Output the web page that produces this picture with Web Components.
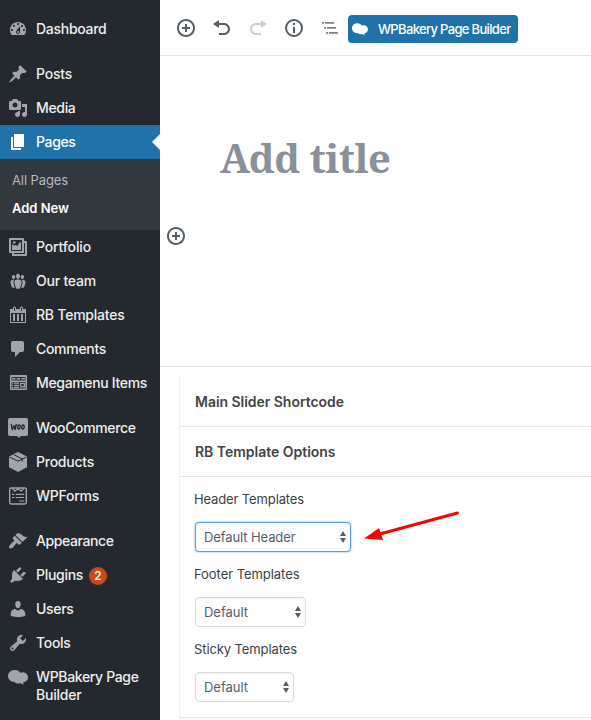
<!DOCTYPE html>
<html lang="en">
<head>
<meta charset="utf-8">
<title>Add New Page</title>
<style>
body { margin: 0; background: #fff; overflow: hidden; font-family: Inter, "Liberation Sans", sans-serif; }
</style>
</head>
<body>
<page-editor></page-editor>
<script>
const ICONS = {
  dashboard: '<path d="M3.76 16h12.48c1.1-1.37 1.76-3.11 1.76-5 0-4.42-3.58-8-8-8s-8 3.58-8 8c0 1.89.66 3.63 1.76 5zM10 4c.55 0 1 .45 1 1s-.45 1-1 1-1-.45-1-1 .45-1 1-1zM6 6c.55 0 1 .45 1 1s-.45 1-1 1-1-.45-1-1 .45-1 1-1zm8 0c.55 0 1 .45 1 1s-.45 1-1 1-1-.45-1-1 .45-1 1-1zm-5.37 5.55L12 7v6c0 1.1-.9 2-2 2s-2-.9-2-2c0-.57.24-1.08.63-1.45zM4 10c.55 0 1 .45 1 1s-.45 1-1 1-1-.45-1-1 .45-1 1-1zm12 0c.55 0 1 .45 1 1s-.45 1-1 1-1-.45-1-1 .45-1 1-1zm-5 3c0-.55-.45-1-1-1s-1 .45-1 1 .45 1 1 1 1-.45 1-1z"/>',
  post: '<path d="M10.44 3.02l1.82-1.82 6.36 6.35-1.83 1.82c-1.05-.68-2.48-.57-3.41.36l-.75.75c-.92.93-1.04 2.35-.35 3.41l-1.83 1.82-2.41-2.41-2.8 2.79c-.42.42-3.38 2.71-3.8 2.29s1.86-3.39 2.28-3.81l2.79-2.79L4.1 9.36l1.83-1.82c1.05.69 2.48.57 3.4-.36l.75-.75c.93-.92 1.05-2.35.36-3.41z"/>',
  media: '<path d="M13 11V4c0-.55-.45-1-1-1h-1.67L9 1H5L3.67 3H2c-.55 0-1 .45-1 1v7c0 .55.45 1 1 1h10c.55 0 1-.45 1-1zM7 4.5c1.38 0 2.5 1.12 2.5 2.5S8.38 9.5 7 9.5 4.5 8.38 4.5 7 5.62 4.5 7 4.5zM14 6h5v10.5c0 1.38-1.12 2.5-2.5 2.5S14 17.88 14 16.5s1.12-2.5 2.5-2.5c.17 0 .34.02.5.05V9h-3V6zm-4 8.05V13h2v3.5c0 1.38-1.12 2.5-2.5 2.5S7 17.88 7 16.5 8.12 14 9.5 14c.17 0 .34.02.5.05z"/>',
  page: '<path d="M6 15V2h10v13H6zm-1 1h8v2H3V5h2v11z"/>',
  gallery: '<path fill-rule="evenodd" d="M16 4h1.960c.57 0 1.040.47 1.040 1.040v12.920c0 .57-.47 1.040-1.040 1.040H5.040C4.470 19 4 18.530 4 17.960V16H2.040C1.470 16 1 15.530 1 14.960V2.040C1 1.470 1.470 1 2.040 1h12.920c.57 0 1.040.47 1.040 1.040V4zM3 14h11V3H3v11zM17 17V6h-1v8.960c0 .57-.47 1.040-1.040 1.040H6v1h11z"/><path d="M4 13V7.200c1 0 1.800.8 2.300 1.700.5-1.100 1.300-1.100 2-.7.500.3.800.7 1.200.7.800-1.100 1.500-3.900 3.500-3.900v8z"/><circle cx="6.300" cy="5.500" r="1.300"/>',
  groups: '<path d="M8.03 4.46c-.29 1.28.55 3.46 1.97 3.46 1.41 0 2.25-2.18 1.96-3.46-.22-.98-1.08-1.63-1.96-1.63-.89 0-1.74.65-1.97 1.63zm-4.13.9c-.25 1.08.47 2.93 1.67 2.93s1.92-1.85 1.67-2.93c-.19-.83-.92-1.39-1.67-1.39s-1.48.56-1.67 1.39zm8.86 0c-.25 1.08.47 2.93 1.66 2.93 1.2 0 1.92-1.85 1.67-2.93-.19-.83-.92-1.39-1.67-1.39-.74 0-1.47.56-1.66 1.39zm-.59 11.43l1.25-4.3C14.2 10 12.71 8.47 10 8.47c-2.72 0-4.21 1.53-3.44 4.02l1.26 4.3C8.05 17.51 9 18 10 18c.98 0 1.94-.49 2.17-1.21zm-6.1-7.63c-.49.67-.96 1.83-.42 3.59l1.12 3.79c-.34.2-.77.31-1.2.31-.85 0-1.65-.41-1.85-1.03l-1.07-3.65c-.65-2.11.61-3.4 2.92-3.4.27 0 .54.02.79.06-.1.1-.2.22-.29.33zm8.35-.39c2.31 0 3.58 1.29 2.92 3.4l-1.07 3.65c-.2.62-1 1.03-1.85 1.03-.43 0-.86-.11-1.2-.31l1.11-3.77c.55-1.78.08-2.94-.42-3.61-.08-.11-.18-.23-.28-.33.25-.04.51-.06.79-.06z"/>',
  calendar: '<path fill-rule="evenodd" d="M15 4h3v14H2V4h3V3c0-.83.67-1.5 1.5-1.5S8 2.17 8 3v1h4V3c0-.83.67-1.5 1.5-1.5S15 2.17 15 3v1zM6 3v2.5c0 .28.22.5.5.5s.5-.22.5-.5V3c0-.28-.22-.5-.5-.5S6 2.72 6 3zm7 0v2.5c0 .28.22.5.5.5s.5-.22.5-.5V3c0-.28-.22-.5-.5-.5s-.5.22-.5.5zm4 14V8H3v9h14zM7 16V9H5v7h2zm4 0V9H9v7h2zm4 0V9h-2v7h2z"/>',
  comment: '<path d="M5 2h9c1.1 0 2 .9 2 2v7c0 1.1-.9 2-2 2h-2l-5 5v-5H5c-1.1 0-2-.9-2-2V4c0-1.1.9-2 2-2z"/>',
  mega: '<path fill-rule="evenodd" d="M3 2h15a1 1 0 0 1 1 1v13a1 1 0 0 1-1 1H3a1 1 0 0 1-1-1V3a1 1 0 0 1 1-1zM3.500 4v3.500h14V4zM3.500 9v6.500h14V9z"/><path d="M4 5h3.500v1.500H4zM8.700 5h3.600v1.500H8.700zM13.500 5H17v1.500h-3.500zM4 9.600h1.200v1.200H4zM6 9.600h5v1.200H6zM4 11.700h1.200v1.200H4zM6 11.700h5v1.200H6zM4 13.800h1.200V15H4zM6 13.800h5V15H6z"/><path fill="none" stroke="currentColor" stroke-width="1.300" d="M12.700 10.300h3.700v3.500h-3.700z"/>',
  woo: '<path d="M2 0h16a2 2 0 0 1 2 2v14a2 2 0 0 1-2 2h-5.500l-1.300 2-2.300-2H2a2 2 0 0 1-2-2V2a2 2 0 0 1 2-2z"/><g fill="none" stroke="#24282f" stroke-width="1.350" stroke-linejoin="round" stroke-linecap="round"><path d="M3.300 6.500l.9 5 1.900-3.800.9 3.800 1.300-5"/><ellipse cx="10.900" cy="9" rx="1.250" ry="2" transform="rotate(10 10.900 9)"/><ellipse cx="15" cy="9" rx="1.250" ry="2" transform="rotate(10 15 9)"/></g>',
  box: '<path d="M10 0l9 4.400v10.900L10 20l-9-4.700V4.400z"/><path d="M1.500 5L10 9.200 18.500 5M5.800 2.700l8.400 4.200v2.600" fill="none" stroke="#24282f" stroke-width="1"/>',
  forms: '<g fill="none" stroke="currentColor"><rect x="1.700" y="2" width="16.600" height="16" rx="1.400" stroke-width="1.400"/><path stroke-width="1.200" d="M4.500 2.500l2.300 2.600L10 2.700l3.200 2.400 2.300-2.600M4 8.300h2.500M7.800 8.300H16M4 11.500h2.500M7.800 11.500H16M11 15h5"/></g>',
  brush: '<path d="M14.480 11.060L7.410 3.990l1.500-1.500c.5-.56 2.300-.47 3.510.32 1.210.8 1.430 1.280 2.910 2.100 1.180.64 2.450 1.260 4.450.85zm-.71.71L6.700 4.700 4.930 6.470c-.39.39-.39 1.020 0 1.410l1.060 1.060c.39.39.39 1.030 0 1.420-.6.6-1.430 1.110-2.210 1.690-.35.26-.7.53-1.010.84C1.430 14.230.4 16.080 1.400 17.070c.99 1 2.840-.03 4.180-1.360.31-.31.58-.66.85-1.020.57-.78 1.080-1.610 1.690-2.210.39-.39 1.020-.39 1.410 0l1.060 1.060c.39.39 1.020.39 1.410 0z"/>',
  plug: '<path d="M13.110 4.360L9.870 7.600 8 5.730l3.240-3.240c.35-.34 1.050-.2 1.560.32.52.51.66 1.210.31 1.550zm-8 1.770l.91-1.120 9.010 9.010-1.190.84c-.71.71-2.630 1.160-3.820 1.160H6.140L4.900 17.260c-.59.59-1.540.59-2.120 0-.59-.58-.59-1.530 0-2.120l1.240-1.240v-3.880c0-1.130.4-3.190 1.090-3.890zm7.260 3.970l3.240-3.240c.34-.35 1.040-.21 1.550.31.52.51.66 1.210.31 1.550l-3.240 3.250z"/>',
  user: '<path d="M10 9.250c-2.270 0-2.730-3.440-2.730-3.440C7 4.020 7.820 2 9.970 2c2.160 0 2.980 2.020 2.710 3.810 0 0-.41 3.440-2.680 3.440zm0 2.570L12.720 10c2.390 0 4.520 2.330 4.520 4.530v2.490s-3.650 1.130-7.240 1.130c-3.650 0-7.240-1.130-7.240-1.130v-2.490c0-2.250 1.940-4.480 4.470-4.480z"/>',
  wrench: '<path fill-rule="evenodd" d="M16.680 9.770c-1.340 1.340-3.300 1.670-4.950.99l-5.410 6.520c-.99.99-2.590.99-3.580 0s-.99-2.590 0-3.570l6.520-5.420c-.68-1.650-.35-3.610.99-4.950 1.280-1.280 3.120-1.620 4.720-1.060l-2.890 2.890 2.820 2.820 2.860-2.870c.53 1.580.18 3.390-1.080 4.650zM3.810 16.210c.4.39 1.040.39 1.430 0 .4-.4.4-1.040 0-1.430-.39-.4-1.030-.4-1.430 0-.39.39-.39 1.030 0 1.430z"/>',
  bakery: '<path d="M6.800 2.900c2.500 0 4.600 1.200 5.600 3 .8-.5 1.700-.7 2.600-.6 2.800.1 5 2.200 5 4.900 0 2.900-2 4.900-4.700 5.100l.2 2.400-2.900-1.500c-2 .7-4.700.5-6.100-1.100C2.700 15 0 12.500 0 9.100c0-3.500 2.900-6.200 6.800-6.200z"/>',
  insert: '<path fill-rule="evenodd" d="M10 1c-5 0-9 4-9 9s4 9 9 9 9-4 9-9-4-9-9-9zm0 16c-3.900 0-7-3.100-7-7s3.100-7 7-7 7 3.100 7 7-3.100 7-7 7zm1-11H9v3H6v2h3v3h2v-3h3V9h-3V6z"/>',
  undo: '<path d="M12 5H7V2L1 6l6 4V7h5c2.200 0 4 1.800 4 4s-1.800 4-4 4H7v2h5c3.300 0 6-2.700 6-6s-2.700-6-6-6z"/>',
  redo: '<path d="M8 5h5V2l6 4-6 4V7H8c-2.200 0-4 1.800-4 4s1.800 4 4 4h5v2H8c-3.300 0-6-2.700-6-6s2.700-6 6-6z"/>',
  info: '<circle cx="10" cy="10" r="8" fill="none" stroke="currentColor" stroke-width="2"/><path d="M9 5h2v2H9zM9 9h2v6H9z"/>',
  outline: '<path d="M2 4h2v1.700H2zM5 4h9v1.700H5zM4 9h2v1.700H4zM7 9h9v1.700H7zM6 14h2v1.700H6zM9 14h9v1.700H9z"/>'
};

function define(name, html, setup) {
  const template = document.createElement('template');
  template.innerHTML = html;
  customElements.define(name, class extends HTMLElement {
    connectedCallback() {
      if (this.shadowRoot) return;
      this.attachShadow({ mode: 'open' }).append(template.content.cloneNode(true));
      if (setup) setup(this, this.shadowRoot);
    }
  });
}

define('wp-icon', `<style>
  :host { display: block; flex: none; width: 20px; height: 20px; }
  svg { display: block; width: 100%; height: 100%; fill: currentColor; overflow: visible; }
</style><svg viewBox="0 0 20 20" aria-hidden="true"></svg>`,
  (el, root) => { root.querySelector('svg').innerHTML = ICONS[el.getAttribute('name')]; });

/* A single line of text whose tracking is tuned to a given advance width. */
define('fit-text', `<style>
  :host { display: inline-block; white-space: nowrap; }
</style><span><slot></slot></span>`,
  (el, root) => {
    const target = +el.getAttribute('w');
    const natural = root.querySelector('span').getBoundingClientRect().width;
    el.style.letterSpacing = (target - natural) / el.textContent.length + 'px';
  });

define('menu-item', `<style>
  :host { display: flex; position: relative; gap: 8px; padding: 7px 0 7px 8px; color: #a0a5aa; }
  .label { color: #eee; font-size: 14px; font-weight: 450; line-height: 18px; padding-top: 1px; min-height: 19px; display: flex; align-items: flex-start; }
  :host([active]) { background: #1f73aa; color: #fff; }
  :host([active]) .label { color: #fff; }
  :host([active])::after { content: ""; position: absolute; right: 0; top: 9px; border: 8px solid transparent; border-left: 0; border-right-color: #fff; }
</style><wp-icon></wp-icon><div class="label"><slot></slot></div>`,
  (el, root) => {
    const icon = document.createElement('wp-icon');
    icon.setAttribute('name', el.getAttribute('icon'));
    root.querySelector('wp-icon').replaceWith(icon);
  });

define('menu-gap', `<style>:host { display: block; height: 11px; }</style>`);

define('sub-menu', `<style>
  :host { display: flex; flex-direction: column; gap: 10px; height: 71px; padding: 12px 12px 0; box-sizing: border-box; background: #33373e; color: #b4b9be; font-size: 13px; line-height: 18px; }
  ::slotted([current]) { color: #fff; font-weight: 600; }
</style><slot></slot>`);

define('count-badge', `<style>
  :host { display: flex; align-items: center; justify-content: center; width: 18px; height: 18px; margin: 1px 0 -1px 6px; border-radius: 9px; background: #ca4a1f; color: #fff; font-size: 12px; font-weight: 500; line-height: 18px; }
</style><slot></slot>`);

define('admin-menu', `<style>
  :host { display: block; width: 160px; height: 720px; padding-top: 12px; box-sizing: border-box; background: #24282f; }
  .two { display: flex; flex-direction: column; align-items: flex-start; }
</style>
<menu-item icon="dashboard"><fit-text w="70.500">Dashboard</fit-text></menu-item>
<menu-gap></menu-gap>
<menu-item icon="post"><fit-text w="36">Posts</fit-text></menu-item>
<menu-item icon="media"><fit-text w="39.500">Media</fit-text></menu-item>
<menu-item icon="page" active><fit-text w="39.500">Pages</fit-text></menu-item>
<sub-menu><fit-text w="56">All Pages</fit-text><fit-text w="57" current>Add New</fit-text></sub-menu>
<menu-item icon="gallery"><fit-text w="55">Portfolio</fit-text></menu-item>
<menu-item icon="groups"><fit-text w="60">Our team</fit-text></menu-item>
<menu-item icon="calendar"><fit-text w="88.500">RB Templates</fit-text></menu-item>
<menu-item icon="comment"><fit-text w="70">Comments</fit-text></menu-item>
<menu-item icon="mega"><fit-text w="111">Megamenu Items</fit-text></menu-item>
<menu-gap></menu-gap>
<menu-item icon="woo"><fit-text w="99.500">WooCommerce</fit-text></menu-item>
<menu-item icon="box"><fit-text w="58">Products</fit-text></menu-item>
<menu-item icon="forms"><fit-text w="63">WPForms</fit-text></menu-item>
<menu-gap></menu-gap>
<menu-item icon="brush"><fit-text w="77.500">Appearance</fit-text></menu-item>
<menu-item icon="plug"><fit-text w="47">Plugins</fit-text><count-badge>2</count-badge></menu-item>
<menu-item icon="user"><fit-text w="37.500">Users</fit-text></menu-item>
<menu-item icon="wrench"><fit-text w="34.500">Tools</fit-text></menu-item>
<menu-item icon="bakery"><div class="two"><fit-text w="102.500">WPBakery Page</fit-text><fit-text w="45.500">Builder</fit-text></div></menu-item>`);

define('editor-toolbar', `<style>
  :host { display: flex; align-items: center; gap: 16px; height: 56px; padding-left: 16px; box-sizing: border-box; border-bottom: 1px solid #e2e4e7; color: #555d66; }
  .off { color: #ccced1; }
  .dim { color: #7c8289; }
  .build { display: flex; align-items: center; gap: 9px; width: 170px; height: 28px; margin: 3px 0 0 -8px; padding-left: 4px; box-sizing: border-box; border-radius: 4px; background: #1f73aa; color: #fff; font-size: 13px; font-weight: 450; line-height: 18px; }
  .build wp-icon { width: 16px; height: 16px; }
  .build fit-text { margin-left: 1px; }
</style>
<wp-icon name="insert"></wp-icon>
<wp-icon name="undo"></wp-icon>
<wp-icon name="redo" class="off"></wp-icon>
<wp-icon name="info"></wp-icon>
<wp-icon name="outline" class="dim"></wp-icon>
<div class="build"><wp-icon name="bakery"></wp-icon><fit-text w="132.500">WPBakery Page Builder</fit-text></div>`);

define('editor-canvas', `<style>
  :host { display: block; height: 310px; box-sizing: border-box; padding: 75px 0 0 6px; }
  h1 { margin: 0 0 41px 54px; height: 54px; font: 700 40px/54px "Noto Serif", "Droid Serif", "DejaVu Serif", serif; color: #8a9099; }
  wp-icon { color: #555d66; }
</style><h1><fit-text w="170.500">Add title</fit-text></h1><wp-icon name="insert"></wp-icon>`);

define('select-box', `<style>
  :host { display: flex; align-items: center; justify-content: space-between; height: 30px; margin-left: 1px; padding: 0 3px 0 8px; box-sizing: border-box; border: 1px solid #d8dadc; border-radius: 4px; color: #555d66; font-size: 13px; background: #fff; box-shadow: inset 0 1px 2px rgba(0,0,0,.05); }
  :host([focused]) { border-color: #5b9dd9; box-shadow: 0 0 2px rgba(60,140,200,.8); }
  svg { display: block; width: 8px; height: 12px; fill: #555d66; }
</style><slot></slot><svg viewBox="0 0 8 12"><path d="M4 0l3 5H1zM4 12l3-5H1z"/></svg>`);

define('template-field', `<style>
  :host { display: flex; flex-direction: column; align-items: flex-start; height: 75px; color: #3c3f43; font-size: 13px; line-height: 18px; }
  .label { margin-bottom: 14px; height: 18px; }
</style><div class="label"><slot name="label"></slot></div><slot></slot>`);

define('meta-boxes', `<style>
  :host { display: block; border-top: 1px solid #e2e4e7; padding: 10px 0 0 19px; position: relative; }
  .card { border-left: 1px solid #f0f0f1; height: 342px; box-sizing: border-box; }
  .card > div { border-bottom: 1px solid #e2e4e7; box-sizing: border-box; }
  .title { display: flex; align-items: center; height: 50px; padding-left: 15px; font-size: 14px; font-weight: 600; color: #444; }
  .fields { height: 241px; padding: 13px 0 0 14px; }
  .w1 { width: 156px; } .w2 { width: 111px; } .w3 { width: 99px; }
  .arrow { position: absolute; left: 200px; top: 139px; width: 104px; height: 38px; }
</style>
<div class="card">
  <div class="title"><fit-text w="149">Main Slider Shortcode</fit-text></div>
  <div class="title"><fit-text w="140.500">RB Template Options</fit-text></div>
  <div class="fields">
    <template-field><fit-text slot="label" w="110">Header Templates</fit-text><select-box class="w1" focused><fit-text w="91.500">Default Header</fit-text></select-box></template-field>
    <template-field><fit-text slot="label" w="105.500">Footer Templates</fit-text><select-box class="w2"><fit-text w="44">Default</fit-text></select-box></template-field>
    <template-field><fit-text slot="label" w="103">Sticky Templates</fit-text><select-box class="w3"><fit-text w="44">Default</fit-text></select-box></template-field>
  </div>
</div>
<svg class="arrow" viewBox="360 506 104 38"><path d="M457.500 513L378 534.500" stroke="#fe0000" stroke-width="3" stroke-linecap="round"/><path d="M364 538.500L379 528L383 540z" fill="#fe0000"/></svg>`);

define('page-editor', `<style>
  :host { display: grid; grid-template-columns: 160px 1fr; height: 720px; overflow: hidden; }
  main { min-width: 0; background: #fff; }
</style>
<admin-menu></admin-menu>
<main><editor-toolbar></editor-toolbar><editor-canvas></editor-canvas><meta-boxes></meta-boxes></main>`);
</script>
</body>
</html>
